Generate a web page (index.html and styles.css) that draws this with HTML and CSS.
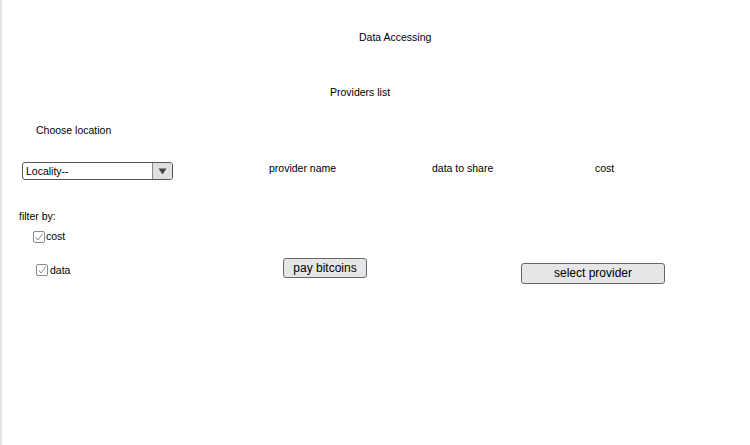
FILE: index.html
```html
<!DOCTYPE html>
<html>
<head>
<meta charset="utf-8">
<link rel="stylesheet" href="styles.css">
</head>
<body>
<div class="page">
  <div class="title">Data Accessing</div>
  <div class="subtitle">Providers list</div>
  <div class="choose">Choose location</div>
  <div class="header-row">
    <div class="cell-select">
      <div class="select">
        <span class="select-text">Locality--</span>
        <span class="select-arrow"><svg width="9" height="7" viewBox="0 0 9 7"><path d="M0.5 0.5 H8.5 L4.5 6.5 Z" fill="#444"/></svg></span>
      </div>
    </div>
    <div class="col-head">provider name</div>
    <div class="col-head">data to share</div>
    <div class="col-head">cost</div>
  </div>
  <div class="filter-label">filter by:</div>
  <label class="check check-cost"><span class="box"><svg width="10" height="10" viewBox="0 0 10 10"><path d="M1.5 5.2 L4 8 L8.8 1.5" fill="none" stroke="#8a8a8a" stroke-width="1"/></svg></span>cost</label>
  <div class="action-row">
    <div class="cell-check">
      <label class="check check-data"><span class="box"><svg width="10" height="10" viewBox="0 0 10 10"><path d="M1.5 5.2 L4 8 L8.8 1.5" fill="none" stroke="#8a8a8a" stroke-width="1"/></svg></span>data</label>
    </div>
    <div class="cell-pay"><button class="btn btn-pay">pay bitcoins</button></div>
    <div class="cell-select-btn"><button class="btn btn-select">select provider</button></div>
  </div>
</div>
</body>
</html>
```
FILE: styles.css
```css
html, body {
  margin: 0;
  padding: 0;
  background: #fff;
}
.page {
  height: 445px;
  border-left: 2px solid #e4e4e4;
  font-family: "Liberation Sans", Arial, sans-serif;
  font-size: 10.5px;
  line-height: 13px;
  color: #000;
}
.title {
  padding: 31px 0 0 357px;
}
.subtitle {
  margin-top: 42px;
  padding-left: 328px;
}
.choose {
  margin-top: 25px;
  padding-left: 34px;
}
.header-row {
  margin-top: 23px;
  display: grid;
  grid-template-columns: 267px 163px 163px auto;
  align-items: start;
}
.cell-select {
  padding: 2px 0 0 20px;
}
.select {
  width: 151px;
  height: 18px;
  box-sizing: border-box;
  border: 1px solid #555;
  border-radius: 3px;
  background: #fff;
  display: flex;
  overflow: hidden;
}
.select-text {
  flex: 1;
  padding-left: 3px;
  line-height: 16px;
  font-size: 10.5px;
}
.select-arrow {
  width: 19px;
  background: #e0e0e0;
  border-left: 1px solid #888;
  display: flex;
  align-items: center;
  justify-content: center;
}
.col-head {
  padding-top: 2px;
}
.filter-label {
  margin-top: 30px;
  padding-left: 17px;
}
.check {
  display: flex;
  align-items: center;
}
.box {
  width: 12px;
  height: 12px;
  box-sizing: border-box;
  border: 1px solid #8a8a8a;
  border-radius: 2px;
  display: flex;
  align-items: center;
  justify-content: center;
  margin-right: 1px;
}
.check-cost {
  margin-top: 7px;
  padding-left: 31px;
}
.action-row {
  margin-top: 15px;
  display: grid;
  grid-template-columns: 281px 238px auto;
  align-items: start;
}
.check-data {
  margin: 6px 0 0 34px;
  height: 12px;
}
.check-data .box {
  margin-right: 2px;
}
.btn {
  font-family: "Liberation Sans", Arial, sans-serif;
  font-size: 12px;
  color: #000;
  background: #e6e6e6;
  border: 1px solid #666;
  border-radius: 3px;
  padding: 0;
  margin: 0;
  box-sizing: border-box;
  display: block;
}
.btn-pay {
  width: 84px;
  height: 20px;
  line-height: 17px;
}
.btn-select {
  margin-top: 5px;
  width: 144px;
  height: 21px;
  line-height: 19px;
}
```
